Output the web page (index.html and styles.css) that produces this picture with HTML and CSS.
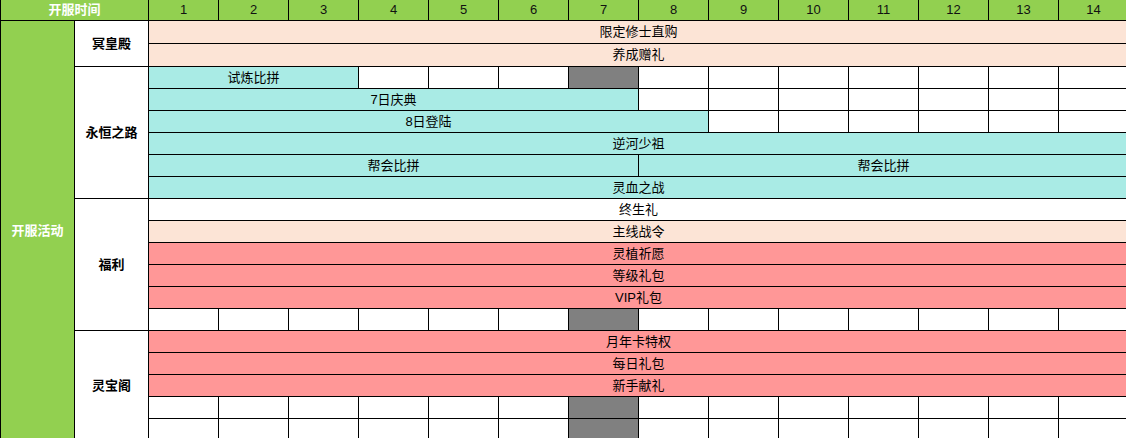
FILE: index.html
```html
<!DOCTYPE html>
<html lang="zh-CN">
<head>
    <meta charset="UTF-8">
    <title>开服活动排期</title>
    <link rel="stylesheet" href="styles.css">
</head>
<body>
<div class="sheet">
    <!-- header -->
    <div class="cell hd title c2">开服时间</div>
    <div class="cell hd">1</div>
    <div class="cell hd">2</div>
    <div class="cell hd">3</div>
    <div class="cell hd">4</div>
    <div class="cell hd">5</div>
    <div class="cell hd">6</div>
    <div class="cell hd">7</div>
    <div class="cell hd">8</div>
    <div class="cell hd">9</div>
    <div class="cell hd">10</div>
    <div class="cell hd">11</div>
    <div class="cell hd">12</div>
    <div class="cell hd">13</div>
    <div class="cell hd">14</div>

    <div class="cell hd title r19">开服活动</div>

    <!-- 冥皇殿 -->
    <div class="cell grp r2">冥皇殿</div>
    <div class="cell peach c14">限定修士直购</div>
    <div class="cell peach c14">养成赠礼</div>

    <!-- 永恒之路 -->
    <div class="cell grp r6">永恒之路</div>
    <div class="cell cyan c3">试炼比拼</div>
    <div class="cell"></div>
    <div class="cell"></div>
    <div class="cell"></div>
    <div class="cell gray"></div>
    <div class="cell"></div>
    <div class="cell"></div>
    <div class="cell"></div>
    <div class="cell"></div>
    <div class="cell"></div>
    <div class="cell"></div>
    <div class="cell"></div>

    <div class="cell cyan c7">7日庆典</div>
    <div class="cell"></div>
    <div class="cell"></div>
    <div class="cell"></div>
    <div class="cell"></div>
    <div class="cell"></div>
    <div class="cell"></div>
    <div class="cell"></div>

    <div class="cell cyan c8">8日登陆</div>
    <div class="cell"></div>
    <div class="cell"></div>
    <div class="cell"></div>
    <div class="cell"></div>
    <div class="cell"></div>
    <div class="cell"></div>

    <div class="cell cyan c14">逆河少祖</div>
    <div class="cell cyan c7">帮会比拼</div>
    <div class="cell cyan c7">帮会比拼</div>
    <div class="cell cyan c14">灵血之战</div>

    <!-- 福利 -->
    <div class="cell grp r6">福利</div>
    <div class="cell c14">终生礼</div>
    <div class="cell peach c14">主线战令</div>
    <div class="cell pink c14">灵植祈愿</div>
    <div class="cell pink c14">等级礼包</div>
    <div class="cell pink c14">VIP礼包</div>
    <div class="cell"></div>
    <div class="cell"></div>
    <div class="cell"></div>
    <div class="cell"></div>
    <div class="cell"></div>
    <div class="cell"></div>
    <div class="cell gray"></div>
    <div class="cell"></div>
    <div class="cell"></div>
    <div class="cell"></div>
    <div class="cell"></div>
    <div class="cell"></div>
    <div class="cell"></div>
    <div class="cell"></div>

    <!-- 灵宝阁 -->
    <div class="cell grp r5">灵宝阁</div>
    <div class="cell pink c14">月年卡特权</div>
    <div class="cell pink c14">每日礼包</div>
    <div class="cell pink c14">新手献礼</div>
    <div class="cell"></div>
    <div class="cell"></div>
    <div class="cell"></div>
    <div class="cell"></div>
    <div class="cell"></div>
    <div class="cell"></div>
    <div class="cell gray"></div>
    <div class="cell"></div>
    <div class="cell"></div>
    <div class="cell"></div>
    <div class="cell"></div>
    <div class="cell"></div>
    <div class="cell"></div>
    <div class="cell"></div>
    <div class="cell"></div>
    <div class="cell"></div>
    <div class="cell"></div>
    <div class="cell"></div>
    <div class="cell"></div>
    <div class="cell"></div>
    <div class="cell gray"></div>
    <div class="cell"></div>
    <div class="cell"></div>
    <div class="cell"></div>
    <div class="cell"></div>
    <div class="cell"></div>
    <div class="cell"></div>
    <div class="cell"></div>
</div>
</body>
</html>
```

FILE: styles.css
```css
html, body {
    margin: 0;
    padding: 0;
    overflow: hidden;
    background: #fff;
}
.sheet {
    display: grid;
    grid-template-columns: 73px 73px repeat(14, 69px);
    grid-template-rows: 20px 22px 22px repeat(17, 21px);
    gap: 1px;
    padding-left: 1px;
    width: max-content;
    background: #000;
    font-family: "Liberation Sans", "Noto Sans CJK SC", sans-serif;
    font-size: 13px;
    color: #000;
}
.cell {
    background: #fff;
    display: flex;
    align-items: center;
    justify-content: center;
    padding-bottom: 1px;
    line-height: 1;
    white-space: nowrap;
}
.hd {
    background: #92d050;
    color: #111;
}
.title {
    color: #fff;
    font-weight: bold;
}
.grp {
    font-weight: bold;
}
.peach {
    background: #fce4d6;
}
.cyan {
    background: #a9ebe5;
}
.pink {
    background: #ff9797;
}
.gray {
    background: #808080;
}
.c2 { grid-column: span 2; }
.c3 { grid-column: span 3; }
.c7 { grid-column: span 7; }
.c8 { grid-column: span 8; }
.c14 { grid-column: span 14; }
.r2 { grid-row: span 2; }
.r5 { grid-row: span 5; }
.r6 { grid-row: span 6; }
.r19 { grid-row: span 19; }
```
